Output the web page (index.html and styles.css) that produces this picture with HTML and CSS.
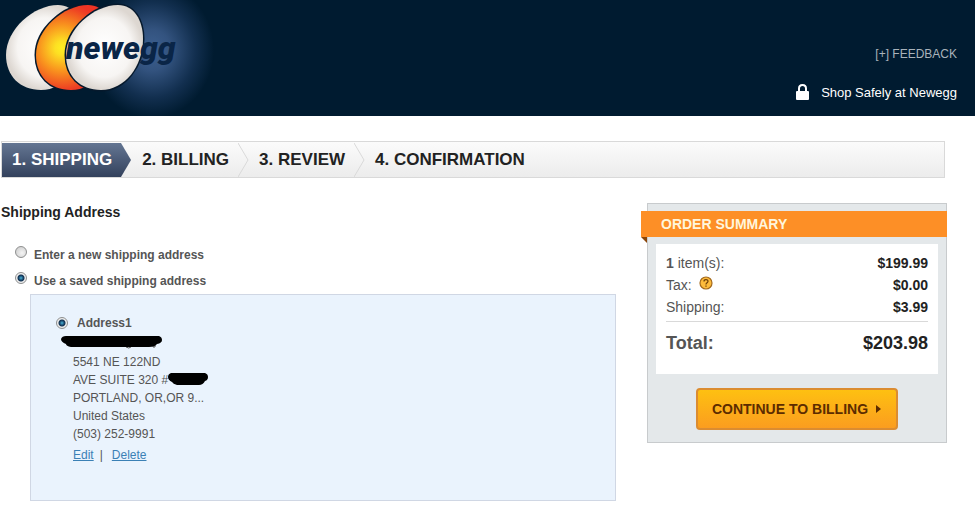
FILE: index.html
```html
<!DOCTYPE html>
<html lang="en">
<head>
    <meta charset="UTF-8">
    <meta name="viewport" content="width=device-width, initial-scale=1.0">
    <title>Newegg - Shipping</title>
    <link rel="stylesheet" href="styles.css">
</head>
<body>

<header class="header">
    <svg class="logo" width="222" height="116" viewBox="0 0 222 116" role="img" aria-label="newegg">
        <defs>
            <radialGradient id="glow">
                <stop offset="0" stop-color="#3d6090"/>
                <stop offset="0.3" stop-color="#33537f"/>
                <stop offset="0.7" stop-color="#122f4f"/>
                <stop offset="1" stop-color="#001b30"/>
            </radialGradient>
            <radialGradient id="shell">
                <stop offset="0" stop-color="#ffffff"/>
                <stop offset="0.7" stop-color="#f7f5f3"/>
                <stop offset="1" stop-color="#ddd7d1"/>
            </radialGradient>
            <radialGradient id="yolk" gradientUnits="userSpaceOnUse" cx="92" cy="48" r="46">
                <stop offset="0" stop-color="#ffee22"/>
                <stop offset="0.15" stop-color="#fde023"/>
                <stop offset="0.5" stop-color="#f9941e"/>
                <stop offset="0.9" stop-color="#ee4023"/>
                <stop offset="1" stop-color="#ee3424"/>
            </radialGradient>
            <path id="egg" d="M118 5 C134 5 143 20 143 39 C143 66 125 90 101 90 C80 90 66 76 66 55 C66 29 94 5 118 5 Z"/>
        </defs>
        <ellipse cx="152" cy="50" rx="62" ry="68" fill="url(#glow)"/>
        <use href="#egg" x="-60" fill="url(#shell)"/>
        <use href="#egg" x="-30" fill="url(#yolk)" stroke="#06192c" stroke-width="3" paint-order="stroke"/>
        <use href="#egg" fill="url(#shell)" stroke="#06192c" stroke-width="3" paint-order="stroke"/>
        <text class="logo-text" x="66" y="59">newegg</text>
    </svg>
    <div class="header-links">
        <a href="#" class="feedback">[+] FEEDBACK</a>
        <a href="#" class="shop-safely">
            <svg width="13" height="16" viewBox="0 0 13 16" aria-hidden="true">
                <path d="M3 8 V4.5 C3 2.4 4.5 1 6.5 1 S10 2.4 10 4.5 V8" fill="none" stroke="#fff" stroke-width="2"/>
                <rect x="0" y="7" width="13" height="9" rx="1" fill="#fff"/>
            </svg>
            Shop Safely at Newegg
        </a>
    </div>
</header>

<div class="container">
    <ol class="steps">
        <li class="step active">1. SHIPPING
            <svg width="11" height="34" viewBox="0 0 11 34" aria-hidden="true">
                <defs>
                    <linearGradient id="tip" x2="0" y2="1">
                        <stop offset="0" stop-color="#647693"/>
                        <stop offset="1" stop-color="#33415c"/>
                    </linearGradient>
                </defs>
                <path d="M0 0 L10 17 L0 34 Z" fill="url(#tip)"/>
            </svg>
        </li>
        <li class="step">2. BILLING
            <svg width="11" height="34" viewBox="0 0 11 34" aria-hidden="true"><path d="M0 0 L10 17 L0 34" fill="none" stroke="#d9d9d9"/></svg>
        </li>
        <li class="step">3. REVIEW
            <svg width="11" height="34" viewBox="0 0 11 34" aria-hidden="true"><path d="M0 0 L10 17 L0 34" fill="none" stroke="#d9d9d9"/></svg>
        </li>
        <li class="step">4. CONFIRMATION</li>
    </ol>

    <form class="checkout">
        <section class="shipping">
            <h1>Shipping Address</h1>

            <div class="choice">
                <input type="radio" id="newAddress" name="addressType">
                <label for="newAddress">Enter a new shipping address</label>
            </div>
            <div class="choice">
                <input type="radio" id="savedAddress" name="addressType" checked>
                <label for="savedAddress">Use a saved shipping address</label>
            </div>

            <div class="saved">
                <div class="saved-title">
                    <input type="radio" id="address1" name="address" checked>
                    <label for="address1">Address1</label>
                </div>
                <address>
                    <svg class="name-mark" width="102" height="18" viewBox="0 0 102 18" aria-hidden="true">
                        <path d="M65 12 q3 2 5 0 M92 9 v3 h2 v-3" fill="none" stroke="#555"/>
                        <path d="M5 1 H98 Q101 2 101 5 Q101 8 96 9 Q94 12 88 12 H10 Q5 11 5 9 Q0 7 0 4 Q1 1 5 1 Z" fill="#000"/>
                    </svg>
                    <div>5541 NE 122ND</div>
                    <div class="suite">AVE SUITE 320 #
                        <svg width="40" height="14" viewBox="0 0 40 14" aria-hidden="true">
                            <path d="M3 0 H37 Q40 1 40 4 Q40 7 37 8 Q35 12 31 12 H9 Q5 11 4 9 Q0 7 0 4 Q0 1 3 0 Z" fill="#000"/>
                        </svg>
                    </div>
                    <div>PORTLAND, OR,OR 9...</div>
                    <div>United States</div>
                    <div>(503) 252-9991</div>
                </address>
                <div class="actions">
                    <a href="#">Edit</a><span>|</span><a href="#">Delete</a>
                </div>
            </div>
        </section>

        <aside class="summary">
            <h2>ORDER SUMMARY</h2>
            <dl class="totals">
                <div class="row">
                    <dt><b>1</b> item(s):</dt>
                    <dd>$199.99</dd>
                </div>
                <div class="row">
                    <dt>Tax:
                        <svg width="14" height="14" viewBox="0 0 14 14" aria-hidden="true">
                            <circle cx="7" cy="7" r="6" fill="#fdbb3c" stroke="#a3691c" stroke-width="1.2"/>
                            <path d="M5 5.4 C5 3 9 3 9 5.3 C9 6.8 7 6.7 7 8.4 M7 9.4 V10.8" fill="none" stroke="#6b3d08" stroke-width="1.2"/>
                        </svg>
                    </dt>
                    <dd>$0.00</dd>
                </div>
                <div class="row">
                    <dt>Shipping:</dt>
                    <dd>$3.99</dd>
                </div>
                <div class="row total">
                    <dt>Total:</dt>
                    <dd>$203.98</dd>
                </div>
            </dl>
            <button type="submit" class="continue-button">CONTINUE TO BILLING
                <svg width="6" height="8" viewBox="0 0 6 8" aria-hidden="true"><path d="M0 0 L5 4 L0 8 Z" fill="#5c2c00"/></svg>
            </button>
        </aside>
    </form>
</div>

</body>
</html>
```

FILE: styles.css
```css
* {
    box-sizing: border-box;
}

body {
    font-family: "Liberation Sans", Arial, sans-serif;
    font-size: 12px;
    margin: 0;
    color: #555;
    background-color: #fff;
}

.header {
    display: flex;
    justify-content: space-between;
    background-color: #001b30;
}

.logo {
    display: block;
}

.logo-text {
    font-family: Roboto, "Liberation Sans", sans-serif;
    font-size: 32px;
    font-weight: 900;
    font-style: italic;
    fill: #0a2547;
}

.header-links {
    display: flex;
    flex-direction: column;
    align-items: flex-end;
    gap: 21px;
    padding: 46px 18px 0 0;
}

.header-links a {
    text-decoration: none;
    line-height: 17px;
}

.feedback {
    color: #a9b3bb;
    font-size: 12px;
}

.shop-safely {
    display: flex;
    gap: 12px;
    color: #fff;
    font-size: 13px;
}

.container {
    padding: 25px 28px 20px 1px;
}

.steps {
    display: flex;
    list-style: none;
    margin: 0 2px 0 0;
    padding: 1px 0 0;
    border: 1px solid #d9d9d9;
    background: linear-gradient(#fbfbfb, #ececec);
    color: #222;
    font-size: 17px;
    font-weight: bold;
    line-height: 34px;
}

.step {
    position: relative;
    padding: 0 9px 0 21px;
}

.step svg {
    position: absolute;
    left: 100%;
    top: 0;
}

.step.active {
    padding-left: 10px;
    color: #fff;
    background: linear-gradient(#647693, #33415c);
}

.checkout {
    display: flex;
    gap: 31px;
    margin-top: 25px;
}

.shipping {
    flex: 1;
}

h1 {
    margin: 0 0 23px;
    color: #222;
    font-size: 14px;
    line-height: 18px;
}

.choice {
    display: flex;
    gap: 7px;
    height: 26px;
    padding-left: 14px;
    font-weight: bold;
}

.choice label {
    padding-top: 3px;
    line-height: 16px;
}

input[type="radio"] {
    appearance: none;
    width: 12px;
    height: 12px;
    margin: 2px 0;
    border: 1px solid #8e8f8f;
    border-radius: 50%;
    background: radial-gradient(circle at 60% 60%, #f4f4f4, #c8c8c8);
}

input[type="radio"]:checked {
    background: radial-gradient(circle, #4bb5d8 0, #1b5077 2px, #12304f 3px, #eee 4px);
}

.saved {
    margin: -2px 0 0 29px;
    padding: 20px 0 36px 25px;
    border: 1px solid #d0d7e4;
    background-color: #eaf3fd;
}

.saved-title {
    display: flex;
    gap: 9px;
    height: 20px;
    font-weight: bold;
    line-height: 16px;
}

address {
    padding-left: 17px;
    font-style: normal;
    line-height: 18px;
}

.name-mark {
    display: block;
    margin-left: -12px;
}

.suite {
    display: flex;
    align-items: center;
}

.actions {
    display: flex;
    gap: 6px;
    padding: 3px 0 0 17px;
    line-height: 18px;
}

.actions span {
    margin-right: 3px;
}

.actions a {
    color: #3b80b5;
}

.summary {
    width: 300px;
    height: 240px;
    padding: 7px 8px 12px;
    border: 1px solid #c8cbcd;
    background-color: #e4e8ea;
}

.summary h2 {
    position: relative;
    margin: 0 -9px 7px -15px;
    padding-left: 20px;
    background-color: #fd8f26;
    color: #fff6dc;
    font-size: 14px;
    line-height: 26px;
}

/* folded end of the ribbon */
.summary h2::after {
    content: "";
    position: absolute;
    left: 0;
    top: 100%;
    border-top: 6px solid #8a4508;
    border-left: 6px solid transparent;
}

.totals {
    margin: 0 0 14px;
    padding: 8px 10px 16px;
    background-color: #fff;
}

.row {
    display: flex;
    justify-content: space-between;
    font-size: 14px;
    line-height: 22px;
}

.row dt svg {
    margin-left: 3px;
}

.row dd {
    margin: 0;
    color: #222;
    font-weight: bold;
}

.row.total {
    margin-top: 3px;
    padding-top: 6px;
    border-top: 1px solid #d9d9d9;
    font-size: 18px;
    font-weight: bold;
    line-height: 30px;
}

.continue-button {
    display: flex;
    align-items: center;
    justify-content: center;
    gap: 8px;
    width: 202px;
    height: 42px;
    margin: 0 auto;
    padding: 0;
    border: 2px solid #db8c31;
    border-radius: 4px;
    background: linear-gradient(#fec011, #fb9d1f);
    color: #5c2c00;
    font-family: inherit;
    font-size: 14px;
    font-weight: bold;
    cursor: pointer;
}

.continue-button:hover {
    background: #fb9d1f;
}
```
